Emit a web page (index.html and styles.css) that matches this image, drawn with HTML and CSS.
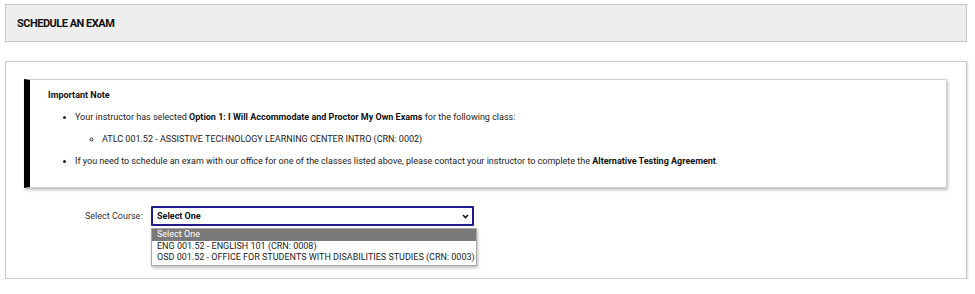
FILE: index.html
```html
<!DOCTYPE html>
<html lang="en">

<head>
    <meta charset="UTF-8">
    <meta name="viewport" content="width=device-width, initial-scale=1.0">
    <title>Schedule an Exam</title>
    <link rel="stylesheet" href="styles.css">
</head>

<body>

    <div class="page-header">
        <h1>Schedule an Exam</h1>
    </div>

    <div class="card">
        <div class="note">
            <div class="note-title">Important Note</div>
            <ul class="note-list">
                <li>Your instructor has selected <b>Option 1: I Will Accommodate and Proctor My Own Exams</b> for the following class:
                    <ul class="sub-list">
                        <li>ATLC 001.52 - ASSISTIVE TECHNOLOGY LEARNING CENTER INTRO (CRN: 0002)</li>
                    </ul>
                </li>
                <li>If you need to schedule an exam with our office for one of the classes listed above, please contact your instructor to complete the <b>Alternative Testing Agreement</b>.</li>
            </ul>
        </div>

        <div class="course-row">
            <label for="course" class="course-label">Select Course:</label>
            <div class="select-wrap">
                <select id="course" class="course-select">
                    <option>Select One</option>
                    <option>ENG 001.52 - ENGLISH 101 (CRN: 0008)</option>
                    <option>OSD 001.52 - OFFICE FOR STUDENTS WITH DISABILITIES STUDIES (CRN: 0003)</option>
                </select>
                <svg class="select-arrow" width="7" height="5" viewBox="0 0 7 5">
                    <path d="M1 1 L3.5 3.5 L6 1" fill="none" stroke="#111" stroke-width="1.6" />
                </svg>
                <div class="options">
                    <div class="option selected">Select One</div>
                    <div class="option">ENG 001.52 - ENGLISH 101 (CRN: 0008)</div>
                    <div class="option">OSD 001.52 - OFFICE FOR STUDENTS WITH DISABILITIES STUDIES (CRN: 0003)</div>
                </div>
            </div>
        </div>
    </div>

</body>

</html>
```

FILE: styles.css
```css
*,
*::before,
*::after {
    box-sizing: border-box;
}

body {
    margin: 0;
    padding: 4px 8px 0 5px;
    font-family: Roboto, 'Liberation Sans', sans-serif;
    font-size: 9px;
    color: #222;
    background-color: white;
}

.page-header {
    height: 38px;
    display: flex;
    align-items: center;
    padding-left: 11px;
    background-color: #eeeeee;
    border: 1px solid #c6c6c6;
}

.page-header h1 {
    margin: 0;
    font-size: 11px;
    font-weight: bold;
    text-transform: uppercase;
    letter-spacing: -0.5px;
    color: #111;
}

.card {
    margin-top: 19px;
    height: 218px;
    padding: 17px 19px 0 18px;
    border: 1px solid #c9c9c9;
    box-shadow: 1px 1px 2px rgba(0, 0, 0, 0.15);
}

.note {
    height: 109px;
    padding: 4px 10px 0 18px;
    border: 1px solid #cfcfcf;
    border-left: 6px solid black;
    box-shadow: 1px 2px 3px rgba(0, 0, 0, 0.25);
    line-height: 22px;
}

.note-title {
    font-weight: bold;
    color: #111;
}

.note-list {
    margin: 0;
    padding-left: 27px;
}

.sub-list {
    margin: 0;
    padding-left: 27px;
    list-style: circle;
}

.note b {
    color: #111;
}

.course-row {
    display: flex;
    align-items: center;
    margin-top: 18px;
    padding-left: 61px;
}

.course-label {
    width: 66px;
    color: #333;
}

.select-wrap {
    position: relative;
    display: flex;
}

.course-select {
    appearance: none;
    width: 323px;
    height: 20px;
    padding: 0 4px;
    font-family: Roboto, 'Liberation Sans', sans-serif;
    font-size: 9px;
    font-weight: bold;
    color: #111;
    background-color: white;
    border: 2px solid #1f1a8a;
    border-radius: 1px;
    outline: none;
}

.select-arrow {
    position: absolute;
    top: 8px;
    right: 5px;
}

.options {
    position: absolute;
    top: 22px;
    left: 0;
    width: 326px;
    padding-bottom: 1px;
    background-color: white;
    border: 1px solid #a5a5a5;
    box-shadow: 1px 2px 3px rgba(0, 0, 0, 0.25);
    line-height: 11.5px;
}

.option {
    padding-left: 5px;
    white-space: nowrap;
    color: #222;
}

.option.selected {
    background-color: #7a7a7a;
    color: white;
}
```
